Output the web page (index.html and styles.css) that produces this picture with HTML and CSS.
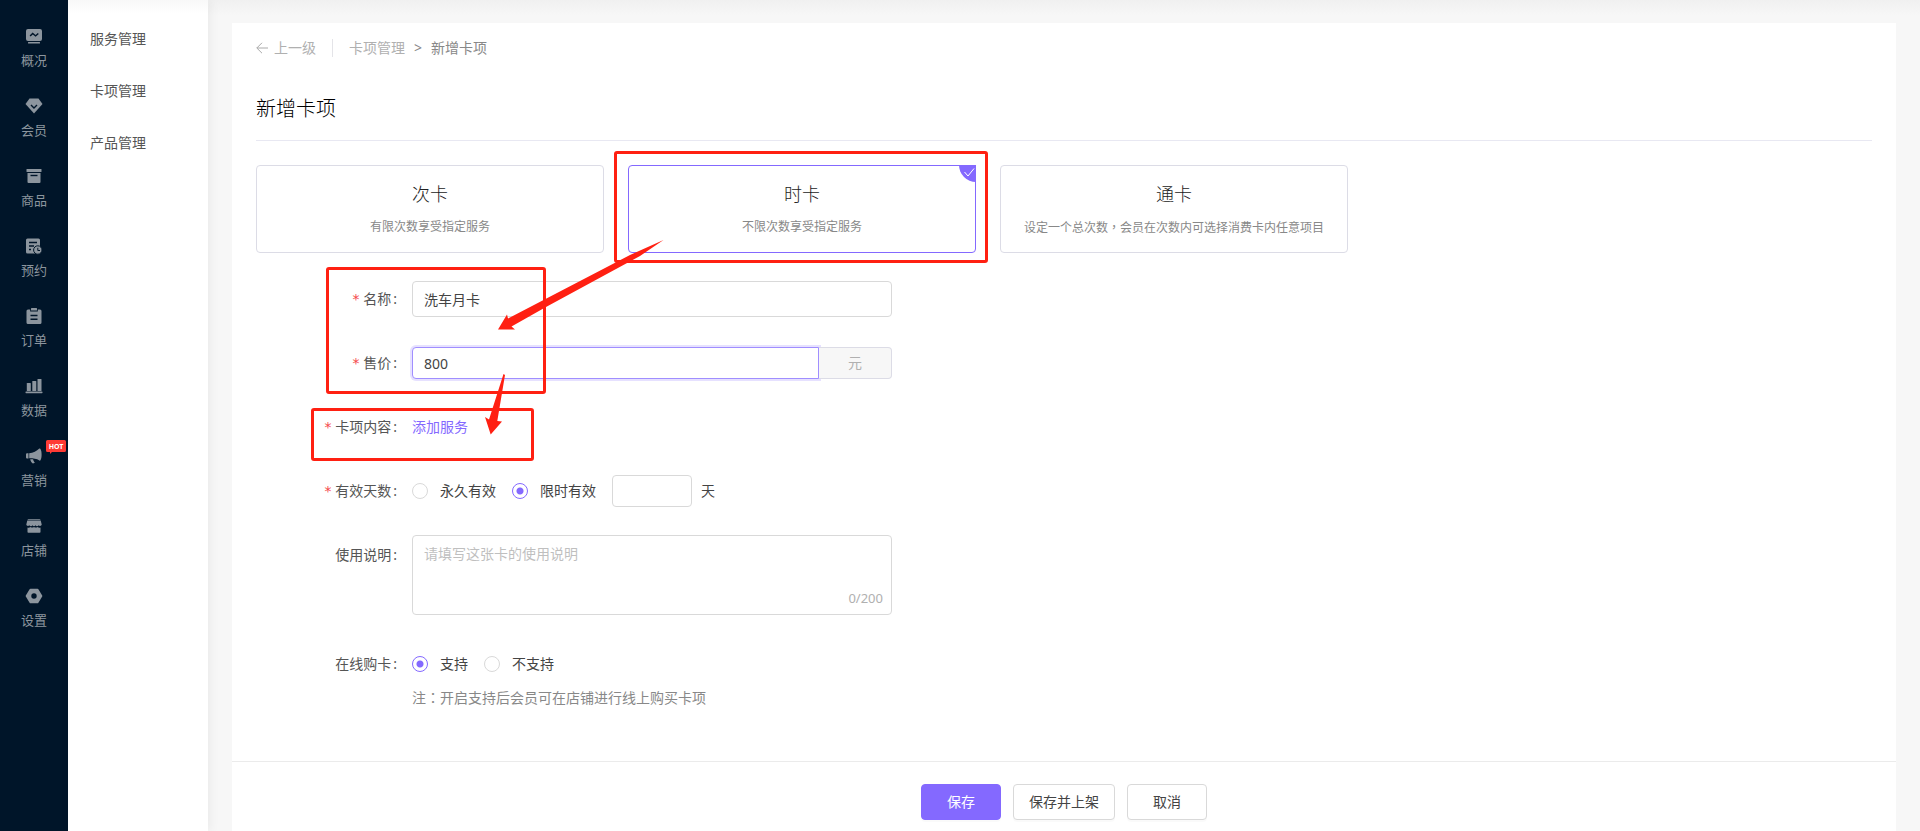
FILE: index.html
```html
<!DOCTYPE html>
<html lang="zh-CN">
<head>
<meta charset="utf-8">
<meta name="viewport" content="width=device-width, initial-scale=1">
<title>新增卡项</title>
<link rel="stylesheet" href="styles.css">
</head>
<body>
<div class="app">
  <nav class="sidebar" aria-label="主导航">
    <a class="side-item" href="#"><svg class="side-icon" viewBox="0 0 18 18"><path fill-rule="evenodd" d="M3 2h12a2 2 0 0 1 2 2v8a2 2 0 0 1-2 2H3a2 2 0 0 1-2-2V4a2 2 0 0 1 2-2zM4.600 8.600l1 1L7.800 7.400l2.800 2.400L13.800 7l-1-1-2.200 2L7.600 5.400z"/><rect x="3" y="15" width="12" height="1.500" rx=".5"/></svg><span>概况</span></a>
    <a class="side-item" href="#"><svg class="side-icon" viewBox="0 0 18 18"><path d="M4.500 1.500h9L17.500 7 9 16.500.5 7z"/><path class="cut" d="M6 8l3 3 3-3"/></svg><span>会员</span></a>
    <a class="side-item" href="#"><svg class="side-icon" viewBox="0 0 18 18"><rect x="1.500" y="2" width="15" height="3" rx=".5"/><path d="M2.500 6h13v9a1 1 0 0 1-1 1h-11a1 1 0 0 1-1-1z"/><path class="cut" d="M5.500 8.500h7"/></svg><span>商品</span></a>
    <a class="side-item" href="#"><svg class="side-icon" viewBox="0 0 18 18"><rect x="1" y="1.500" width="14" height="15" rx="1.500"/><path class="cut" d="M4 5.500h8M4 9h5M4 12.500h2"/><circle class="clock" cx="12.800" cy="13" r="4.200"/><path class="cut thin" d="M12.800 10.800V13.500H15"/></svg><span>预约</span></a>
    <a class="side-item" href="#"><svg class="side-icon" viewBox="0 0 18 18"><path d="M3 2.500h2.200V4.500h7.600V2.500H15a1.500 1.500 0 0 1 1.500 1.500v11.500A1.500 1.500 0 0 1 15 17H3a1.500 1.500 0 0 1-1.500-1.500V4A1.500 1.500 0 0 1 3 2.500z"/><rect x="6" y="1" width="6" height="2.500" rx=".5"/><path class="cut" d="M5.500 8.500h7M5.500 12.200h7"/></svg><span>订单</span></a>
    <a class="side-item" href="#"><svg class="side-icon" viewBox="0 0 18 18"><rect x="1.800" y="6" width="4" height="8" rx=".6"/><rect x="7.300" y="4" width="4" height="10" rx=".6"/><rect x="12.500" y="2" width="4" height="12" rx=".6"/><rect x=".5" y="14.500" width="17" height="1.700" rx=".6"/></svg><span>数据</span></a>
    <a class="side-item" href="#"><svg class="side-icon" viewBox="0 0 18 18"><path d="M2 6.200h1.500v5.200H2A1 1 0 0 1 1 10.400V7.200a1 1 0 0 1 1-1zM4.200 6.200C8 6 12 4 14 1.800c.7-.6 1.400-.3 1.600.4.800 1.500 1 3 1 5.200s-.2 4-1 5.600c-.3.700-1 .9-1.600.3-2-1.500-5.800-2-9.800-2z"/><path d="M5.200 12.300h2.900c.2 1.400.8 2.300 1.800 3.500l-2 .8C6.500 15.600 5.500 14 5.200 12.300z"/></svg><span>营销</span><svg class="hot" viewBox="0 0 20 14" aria-label="HOT"><path d="M1.500 0h17A1.500 1.500 0 0 1 20 1.500v9a1.500 1.500 0 0 1-1.500 1.500H6l-2 2v-2H1.500A1.500 1.500 0 0 1 0 10.500v-9A1.500 1.500 0 0 1 1.500 0z"/><text x="10" y="9" text-anchor="middle">HOT</text></svg></a>
    <a class="side-item" href="#"><svg class="side-icon" viewBox="0 0 18 18"><path d="M3.500 2h11a1 1 0 0 1 1 .8H2.500a1 1 0 0 1 1-.8zM2.300 3.500h13.400l1 4c0 1.500-2.200 2-3 .8-.8 1.200-2.500 1.200-3.200 0-.7 1.200-2.300 1.200-3 0-.7 1.200-2.400 1.200-3.200 0-.8 1.200-3 .7-3-.8z"/><path d="M2.500 10.500q1.500.6 3-.4 1.600 1 3.500 0 1.900 1 3.500 0 1.500 1 3 .4V15a.8.8 0 0 1-.8.800H3.300a.8.8 0 0 1-.8-.8z"/></svg><span>店铺</span></a>
    <a class="side-item" href="#"><svg class="side-icon" viewBox="0 0 18 18"><path fill-rule="evenodd" d="M5.500 1.800h7a1 1 0 0 1 .9.500l3.800 6.200a1 1 0 0 1 0 1l-3.800 6.200a1 1 0 0 1-.9.500h-7a1 1 0 0 1-.9-.5L.8 9.500a1 1 0 0 1 0-1l3.800-6.200a1 1 0 0 1 .9-.5zM9 6.300a2.700 2.700 0 1 0 0 5.400 2.700 2.700 0 0 0 0-5.400z"/></svg><span>设置</span></a>
  </nav>

  <nav class="subnav" aria-label="服务导航">
    <a href="#">服务管理</a>
    <a href="#">卡项管理</a>
    <a href="#">产品管理</a>
  </nav>

  <main class="main">
    <form class="panel">
      <div class="content">
        <div class="crumbs">
          <a class="back" href="#"><svg class="back-icon" viewBox="0 0 12 12"><path d="M12 6H.8M6 .8L.8 6 6 11.200"/></svg>上一级</a>
          <a class="crumb" href="#">卡项管理</a>
          <span class="sep">&gt;</span>
          <span class="current">新增卡项</span>
        </div>
        <h1 class="title">新增卡项</h1>

        <div class="cards">
          <button type="button" class="card"><span class="card-name">次卡</span><span class="card-desc">有限次数享受指定服务</span></button>
          <button type="button" class="card selected"><span class="card-name">时卡</span><span class="card-desc">不限次数享受指定服务</span><svg class="tick" viewBox="0 0 17 17"><path class="tick-bg" d="M0 0h17v17A17 17 0 0 1 0 0z"/><path class="tick-mark" d="M5.500 7l3.500 4 6-7.500"/></svg></button>
          <button type="button" class="card"><span class="card-name">通卡</span><span class="card-desc">设定一个总次数<span class="punct" lang="zh-TW">，</span>会员在次数内可选择消费卡内任意项目</span></button>
        </div>

        <div class="row">
          <label class="label required" for="name">名称</label>
          <input class="input wide" id="name" type="text" value="洗车月卡">
        </div>
        <div class="row">
          <label class="label required" for="price">售价</label>
          <div class="group"><input class="input focused" id="price" type="text" value="800"><span class="addon">元</span></div>
        </div>
        <div class="row">
          <span class="label required">卡项内容</span>
          <a class="link" href="#">添加服务</a>
        </div>
        <div class="row">
          <span class="label required">有效天数</span>
          <div class="options">
            <label class="option"><input type="radio" name="valid">永久有效</label>
            <label class="option"><input type="radio" name="valid" checked>限时有效</label>
            <label class="days"><input class="input short" type="text" aria-label="有效天数">天</label>
          </div>
        </div>
        <div class="row tall">
          <label class="label" for="desc">使用说明</label>
          <div class="area"><textarea class="input" id="desc" placeholder="请填写这张卡的使用说明"></textarea><span class="count">0/200</span></div>
        </div>
        <div class="row online">
          <span class="label">在线购卡</span>
          <div class="options">
            <label class="option"><input type="radio" name="online" checked>支持</label>
            <label class="option"><input type="radio" name="online">不支持</label>
          </div>
        </div>
        <p class="note">注<span class="punct" lang="zh-TW">：</span>开启支持后会员可在店铺进行线上购买卡项</p>
      </div>
      <div class="footer">
        <button type="submit" class="btn primary">保存</button>
        <button type="button" class="btn">保存并上架</button>
        <button type="button" class="btn">取消</button>
      </div>
    </form>
  </main>
</div>

<svg class="marks" width="1000" height="480" viewBox="0 0 1000 480" aria-hidden="true">
  <rect x="615.500" y="152.500" width="371" height="109" rx="1.500"/>
  <rect x="327.500" y="268.500" width="217" height="124" rx="1.500"/>
  <rect x="312.500" y="409.500" width="220" height="50" rx="1.500"/>
  <path d="M663.500 240L630 255 508 318.500 507 314.500 498 329.500H515L511.500 326.500 546 307 640 256z"/>
  <path d="M503.500 374L489 419.500 485 417 490.700 434.500 502 421.500 497.300 421 505 375z"/>
</svg>
</body>
</html>
```
FILE: styles.css
```css
* { box-sizing: border-box; }

body {
  margin: 0;
  font: 14px/22px "Noto Sans", "Noto Sans CJK SC", sans-serif;
  color: #444;
  background: #f7f7f7;
}

a { color: inherit; text-decoration: none; }
button, input, textarea { font: inherit; color: inherit; }

.app { display: flex; min-height: 100vh; }

/* primary navigation */
.sidebar {
  flex: none;
  width: 68px;
  padding-top: 16px;
  background: #001529;
}
.side-item {
  position: relative;
  display: flex;
  flex-direction: column;
  align-items: center;
  gap: 5px;
  height: 70px;
  padding-top: 11px;
  font-size: 13px;
  line-height: 20px;
  color: #8c959e;
}
.side-icon { width: 18px; height: 18px; fill: #8c959e; }
.side-icon .cut { fill: none; stroke: #001529; stroke-width: 1.4; }
.side-icon .thin { stroke-width: 1; }
.side-icon .clock { stroke: #001529; stroke-width: 1; }
.hot { position: absolute; top: 4px; left: 46px; width: 20px; height: 14px; fill: #ff3b35; }
.hot text { font: 700 7px "Noto Sans", sans-serif; fill: #fff; }

/* secondary navigation */
.subnav {
  z-index: 1;
  flex: none;
  display: flex;
  flex-direction: column;
  gap: 30px;
  width: 140px;
  padding: 28px 22px;
  color: #555;
  background: linear-gradient(#f8f8f8, #fff 14px);
  box-shadow: 2px 0 10px rgba(0, 0, 0, .06);
}

.main {
  flex: 1;
  display: flex;
  padding: 23px 24px 0;
  background: linear-gradient(#f0f0f0, #f7f7f7 15px);
}
.panel { flex: 1; display: flex; flex-direction: column; background: #fff; }
.content { padding: 14px 24px 24px; }

.crumbs { display: flex; align-items: center; color: #b0b0b0; }
.back { display: flex; align-items: center; gap: 6px; padding-right: 16px; line-height: 18px; border-right: 1px solid #e4e4e8; }
.back-icon { width: 12px; height: 12px; fill: none; stroke: #aaa; }
.crumb { margin-left: 16px; }
.sep { margin: 0 9px; color: #888; }
.current { color: #888; }

.title {
  margin: 36px 0 24px;
  padding-bottom: 17px;
  font-size: 20px;
  font-weight: 300;
  line-height: 28px;
  color: #000;
  border-bottom: 1px solid #e8e8f2;
}

.cards { display: flex; gap: 24px; margin-bottom: 28px; }
.card {
  position: relative;
  display: flex;
  flex-direction: column;
  align-items: center;
  width: 348px;
  height: 88px;
  padding: 14px 0 0;
  background: #fff;
  border: 1px solid #dcdce6;
  border-radius: 4px;
}
.card-name { font-size: 18px; font-weight: 300; line-height: 28px; color: #222; }
.card-desc { margin-top: 10px; font-size: 12px; line-height: 18px; color: #888; }
.card.selected { border-color: #8469ff; }
.tick { position: absolute; top: -1px; right: -1px; width: 17px; height: 17px; }
.tick-bg { fill: #8469ff; }
.tick-mark { fill: none; stroke: #fff; }
.punct { font-family: "Noto Sans CJK TC", sans-serif; }

/* form rows */
.row { display: flex; align-items: center; height: 36px; margin-bottom: 28px; }
.row.tall { align-items: flex-start; height: 80px; margin: -2px 0 31px; }
.row.tall .label { padding-top: 9px; }
.row.online { margin-bottom: 4px; }
.label { width: 156px; padding-right: 15px; text-align: right; color: #555; }
.label::after { content: ":"; margin-left: 2px; }
.label.required::before {
  content: "*";
  margin-right: 3px;
  font-family: "DejaVu Sans Mono", monospace;
  color: #f5484a;
}

.input {
  height: 32px;
  padding: 4px 11px;
  background: #fff;
  border: 1px solid #d9d9d9;
  border-radius: 4px;
  outline: 0;
}
.wide { width: 480px; height: 36px; }
.short { width: 80px; }
.group { display: flex; width: 480px; }
.focused {
  flex: 1;
  border-color: #a08eff;
  border-radius: 4px 0 0 4px;
  box-shadow: 0 0 0 2px #e6e1ff;
}
.addon {
  z-index: 1;
  width: 73px;
  line-height: 30px;
  text-align: center;
  color: #b0b0b0;
  background: #f7f7f7;
  border: 1px solid #dcdce6;
  border-left: 0;
  border-radius: 0 4px 4px 0;
}
.link { color: #8469ff; }

.options, .option, .days { display: flex; align-items: center; }
.options { gap: 16px; }
.option { gap: 12px; }
.days { gap: 9px; }
.option input {
  appearance: none;
  width: 16px;
  height: 16px;
  margin: 0;
  border: 1px solid #d9d9d9;
  border-radius: 50%;
}
.option input:checked {
  border-color: #8469ff;
  background: radial-gradient(circle, #8469ff 3px, #fff 4px);
}

.area { position: relative; display: flex; width: 480px; height: 80px; }
.area .input { flex: 1; height: auto; padding: 7px 11px; resize: none; }
.area .input::placeholder { color: #bfbfbf; }
.count { position: absolute; right: 9px; bottom: 6px; font-size: 13px; color: #b0b0b0; }
.note { margin: 0 0 0 156px; color: #888; }

.footer {
  display: flex;
  justify-content: center;
  gap: 12px;
  margin-top: auto;
  padding: 22px 0 11px;
  border-top: 1px solid #ebebeb;
}
.btn {
  min-width: 80px;
  height: 36px;
  padding: 0 15px;
  background: #fff;
  border: 1px solid #d9d9d9;
  border-radius: 4px;
  box-shadow: 0 2px 0 rgba(0, 0, 0, .02);
}
.primary { color: #fff; background: #8469ff; border-color: #8469ff; }

/* guide marks drawn over the form */
.marks { position: absolute; top: 0; left: 0; z-index: 2; pointer-events: none; }
.marks rect { fill: none; stroke: #ff2012; stroke-width: 3; }
.marks path { fill: #ff2012; }
```
